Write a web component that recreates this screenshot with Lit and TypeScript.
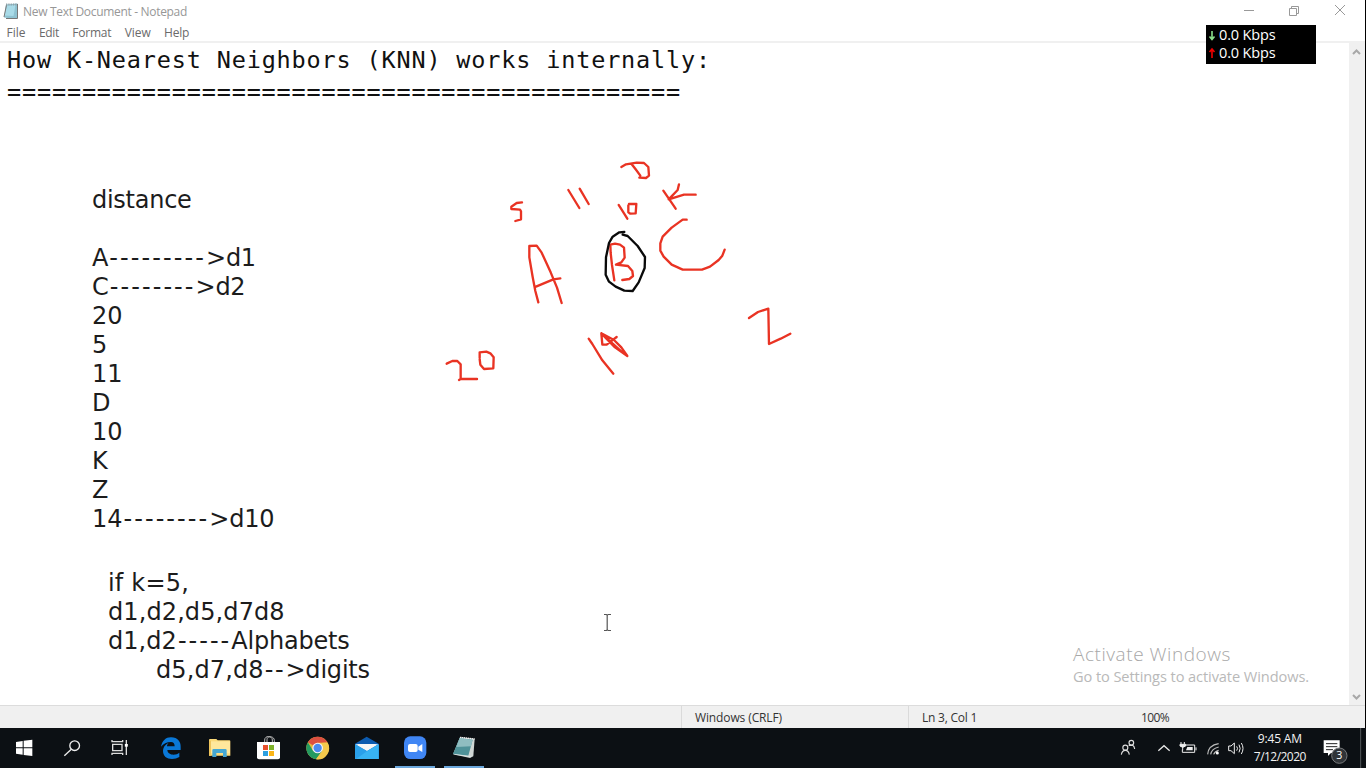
import { LitElement, html, svg, css } from "lit";
import { customElement } from "lit/decorators.js";

const ADV: Record<string, number> = {
  d: 0.623, i: 0.274, s: 0.521, t: 0.394, a: 0.601, n: 0.633, c: 0.521, e: 0.596, A: 0.684, C: 0.698,
  D: 0.771, K: 0.693, Z: 0.685, "-": 0.454, ">": 0.818, "=": 0.818, ",": 0.364, " ": 0.352, f: 0.352,
  k: 0.592, l: 0.274, p: 0.623, h: 0.633, b: 0.623, g: 0.623,
};
const advance = (s: string) => [...s].reduce((w, c) => w + (ADV[c] ?? 0.636), 0) * 23.92;

const NOTES = ["distance", "", "A--------->d1", "C-------->d2", "20", "5", "11", "D", "10", "K", "Z", "14-------->d10"];

const MENU: [string, number][] = [["File", 19], ["Edit", 20], ["Format", 39], ["View", 26], ["Help", 25]];

const line = (s: string) =>
  html`<div class="note">${(s.match(/-+|[^-]+/g) ?? []).map((r) => html`<span class=${r[0] === "-" ? "dash" : ""} data-w=${advance(r)}>${r}</span>`)}</div>`;

const taskIcon = (cx: number, body: unknown, cls = "") =>
  html`<div class="task ${cls}"><svg class="ticon" viewBox="${cx - 72} 84 144 120">${body}</svg></div>`;

const trayIcon = (x: number, w: number, body: unknown) =>
  html`<svg width=${w / 3} height="40" viewBox="${x} 84 ${w} 120">${body}</svg>`;

@customElement("app-root")
export class AppRoot extends LitElement {
  static styles = css`
    :host { display: flex; flex-direction: column; position: relative; width: 1366px; height: 768px; overflow: hidden; background: #fff; font: 12px/18px "Open Sans", "Noto Sans", sans-serif; color: #000; }
    * { box-sizing: border-box; }
    span { white-space: pre; }
    svg { display: block; flex: none; }
    .window { display: flex; flex-direction: column; height: 728px; border-right: 1px solid #000; }
    .title { display: flex; height: 23px; padding-left: 3px; color: #979797; }
    .title .name { line-height: 23px; margin-left: 4px; }
    .controls { margin-left: auto; }
    .menu { display: flex; gap: 13.4px; height: 18px; padding-left: 6.5px; line-height: 19px; color: #6a6a6a; }
    .body { display: flex; flex: 1; min-height: 0; border-top: 2px solid #f0f0f0; }
    .text { flex: 1; padding: 1px 0 0 7px; }
    .head { font: 23.5px/32px "DejaVu Sans Mono", monospace; color: #111; height: 32px; }
    .notes { padding: 78px 0 0 85px; }
    .more { padding: 35px 0 0 101px; }
    .note { display: flex; height: 29px; font: 24px/29px "DejaVu Sans", sans-serif; color: #1c1c1c; }
    .dash { text-indent: 1px; }
    .indent { padding-left: 48px; }
    .scroll { width: 16px; background: #f0f0f0; display: flex; flex-direction: column; justify-content: space-between; }
    .status { display: flex; height: 23px; background: #f0f0f0; border-top: 1px solid #dcdcdc; line-height: 24px; color: #333; }
    .cell { border-left: 1px solid #dadada; padding-left: 13px; }
    .c0 { width: 681px; } .c1 { width: 227px; } .c2 { width: 220px; } .c3 { border: 0; }
    .taskbar { display: flex; height: 40px; background: #0c1014; color: #f2f2f2; }
    .task { width: 48px; display: flex; flex-direction: column; align-items: center; }
    .app { width: 48.8px; }
    .first { margin-left: 3px; }
    .ticon { width: 48px; height: 40px; }
    .run { background: linear-gradient(#6ba7dc, #6ba7dc) center bottom / 40px 2px no-repeat; }
    .tray { display: flex; margin-left: auto; }
    .clock { width: 62px; display: flex; flex-direction: column; align-items: center; padding: 2px 9px 0 0; }
    .ink { position: absolute; left: 0; top: 0; fill: none; stroke: #e93323; stroke-width: 7; stroke-linecap: round; stroke-linejoin: round; }
    .net { position: absolute; left: 1206px; top: 25px; width: 110px; height: 39px; background: #000; color: #fff; font-size: 14.5px; line-height: 18px; padding: 1px 0 0 2px; }
    .row { display: flex; gap: 3px; }
    .activate { position: absolute; left: 1073px; top: 640px; color: #b9b9b9; font-size: 15px; line-height: 20px; }
    .big { font-size: 19px; line-height: 28px; height: 28px; display: flex; font-weight: 300; color: #a8a8a8; }
    .small { display: flex; font-size: 14.6px; height: 20px; line-height: 17px; }
  `;

  // Spread each label over the advance width noted in its data-w attribute.
  firstUpdated() {
    this.renderRoot.querySelectorAll<HTMLElement>("[data-w]").forEach((el) => {
      const n = [...(el.textContent ?? "")].length;
      const natural = el.getBoundingClientRect().width;
      el.style.letterSpacing = `${(Number(el.dataset.w) - natural) / n}px`;
    });
  }

  render() {
    return html`
      <div class="window">
        <div class="title">
          <svg width="16" height="23" viewBox="0 0 16 23">
            <path d="M3 4.5 14.5 3.5 14 18 11 19 1 17.5z" fill="#8fc3d2" />
            <path d="M4 5.5 12.5 5 10.5 16 1.5 15.5z" fill="#a9dbe8" />
            <path d="M14.5 4V18.5H3M1 17 3.5 5" stroke="#777" fill="none" />
            <path d="M3 4.5H14" stroke="#91a4aa" stroke-dasharray="1.3 1" stroke-width="2" />
          </svg>
          <span class="name" data-w="164">New Text Document - Notepad</span>
          <svg class="controls" width="136" height="23" viewBox="1229 0 136 23" fill="none" stroke="#999">
            <path d="M1244 10.5H1254M1289.5 8.5H1296.5V15.5H1289.5zM1291.5 8V6.5H1298.5V13.5H1297M1335 5 1345 15M1345 5 1335 15" />
          </svg>
        </div>
        <div class="menu">${MENU.map(([t, w]) => html`<span data-w=${w}>${t}</span>`)}</div>
        <div class="body">
          <div class="text">
            <div class="head"><span data-w="704">How K-Nearest Neighbors (KNN) works internally:</span></div>
            <div class="head"><span data-w="674">${"=".repeat(45)}</span></div>
            <div class="notes">${NOTES.map(line)}</div>
            <div class="more">
              ${line("if k=5,")}${line("d1,d2,d5,d7d8")}${line("d1,d2-----Alphabets")}
              <div class="indent">${line("d5,d7,d8-->digits")}</div>
            </div>
          </div>
          <div class="scroll">
            <svg width="16" height="17" fill="none" stroke="#a8a8a8" stroke-width="2"><path d="M4 11 7.5 7.5 11 11" /></svg>
            <svg width="16" height="17" fill="none" stroke="#a8a8a8" stroke-width="2"><path d="M4 7 7.500 10.500 11 7" /></svg>
          </div>
        </div>
        <div class="status">
          <div class="c0"></div>
          <div class="cell c1"><span data-w="87">Windows (CRLF)</span></div>
          <div class="cell c2"><span data-w="55">Ln 3, Col 1</span></div>
          <div class="cell c3"><span data-w="28">100%</span></div>
        </div>
      </div>

      <div class="taskbar">
        ${taskIcon(72, svg`<path d="M48 126 68 123V142H48zM71 122 97 119V142H71zM48 145H68V164L48 161zM71 145H97V168L71 165z" fill="#fff"/>`)}
        ${taskIcon(216, svg`<g fill="none" stroke="#eee" stroke-width="4"><circle cx="224" cy="137" r="14.5"/><path d="M214 148 193 167"/></g>`)}
        ${taskIcon(360, svg`<g fill="none" stroke="#ddd" stroke-width="4"><path d="M338 133H366V152H338zM336 120V125H368V120M336 165V160H368V165M379 120V165"/><path d="M379 132V140" stroke="#fff" stroke-width="9"/></g>`)}
        ${taskIcon(514, svg`<path d="M484 140C488 121 500 111 515 112 534 112 544 126 543 141V150H503C504 160 513 164 521 164 529 164 535 161 539 158V171C532 175 526 177 517 177 501 177 490 168 490 153 490 142 497 133 507 129 503 132 502 136 502 139H525C525 130 521 126 514 126 501 126 491 131 484 140Z" fill="#0a78d7"/>`, "app first")}
        ${taskIcon(660, svg`<path d="M627 120Q627 117 630 117H649L653 121H688Q691 121 691 124V167H627z" fill="#fbd978"/><path d="M632 124H690V160H632z" fill="#ffe79c"/><path d="M627 121V167H633V122z" fill="#efc45b"/><path d="M637 171V151Q637 147 641 147H676Q680 147 680 151V171H669V159H649V171z" fill="#45a7d3"/>`, "app")}
        ${taskIcon(57, svg`<path d="M44 127V120C44 106 67 106 67 120V127M51 127V119C51 106 74 108 73 122V127" fill="none" stroke="#bbb" stroke-width="3"/><path d="M21 126H90V172Q90 178 84 178H27Q21 178 21 172z" fill="#fff"/><path d="M39 135H54V150H39z" fill="#e8502c"/><path d="M57 135H72V150H57z" fill="#7fb32a"/><path d="M39 153H54V168H39z" fill="#2c9fe0"/><path d="M57 153H72V168H57z" fill="#fbb517"/>`, "app")}
        ${taskIcon(204, svg`<circle cx="203" cy="144" r="34" fill="#e5b43c"/><path d="M203 144 173.500 127A34 34 0 0 1 232.500 127L217 128z" fill="#dc5040"/><path d="M173.500 127A34 34 0 0 0 198 177.700L217 152 189 152z" fill="#249a60"/><path d="M203 128H233A34 34 0 0 1 198 178L217 152z" fill="#f4c94c"/><circle cx="203" cy="144" r="16" fill="#f4f4f4"/><circle cx="203" cy="144" r="12.500" fill="#4a8af0"/>`, "app")}
        ${taskIcon(351, svg`<path d="M315 131 350 110 386 131V177H315z" fill="#0c5bb0"/><path d="M315 133H386L351 154z" fill="#f3f5f7"/><path d="M315 132 351 153 386 132V177H315z" fill="#2aa0ea"/><path d="M321 132H380L351 151z" fill="#f6f6f6"/><path d="M386 134V177H318L352 153z" fill="#38b3f3"/>`, "app")}
        ${taskIcon(496, svg`<rect x="463" y="109" width="67" height="68" rx="19" fill="#4086f4"/><rect x="475" y="132" width="29" height="24" rx="6" fill="#fff"/><path d="M506 140 518 132V156L506 149z" fill="#fff"/>`, "app run")}
        ${taskIcon(643, svg`<path d="M631 112 675 116 671 169 661 174 610 163z" fill="#cfd6d4"/><path d="M630 114 669 119 656 167 610 162z" fill="#4f9299"/><path d="M630 114 669 119 664 139 620 141z" fill="#8fbdc1"/><path d="M631 112 675 117" stroke="#eee" stroke-width="4" stroke-dasharray="4 2"/><path d="M614 163 658 169 664 170" stroke="#e4eded" stroke-width="2" fill="none"/>`, "app run")}
        <div class="tray">
          ${trayIcon(84, 96, svg`<g fill="none" stroke="#ddd" stroke-width="3.500"><circle cx="124" cy="128" r="7"/><path d="M116 136 128 136Q133 139 134 147"/><circle cx="106" cy="143" r="7.500"/><path d="M94 164Q96 151 106 151 116 151 118 164"/></g>`)}
          ${trayIcon(180, 75, svg`<path d="M205 152 222 137 239 152" fill="none" stroke="#e6e6e6" stroke-width="4"/>`)}
          ${trayIcon(255, 78, svg`<g fill="none" stroke="#eee" stroke-width="3"><path d="M287 135H314V157H277V149M318 142V151M273 126V133M283 126V133M278 141V151"/><path d="M270 133H287V138Q278 146 270 138z" fill="#eee"/><path d="M292 141H308V151H288z" fill="#eee" stroke="none"/></g>`)}
          ${trayIcon(333, 69, svg`<g fill="none" stroke="#bbb" stroke-width="3.500"><path d="M353 163Q355 136 386 131M362 163Q365 146 386 141M371 163Q374 155 386 151"/></g><circle cx="382" cy="159" r="4.500" fill="#fff"/>`)}
          ${trayIcon(402, 87, svg`<g fill="none" stroke="#eee" stroke-width="3"><path d="M416 138H423L433 129V161L423 152H416zM440 139Q445 145 440 152M447 134Q454 145 447 157M454 129Q464 145 454 162"/></g>`)}
          <div class="clock"><span data-w="44">9:45 AM</span><span data-w="52">7/12/2020</span></div>
          ${trayIcon(676, 152, svg`<path d="M702 121H750V159H724L715 168V159H702z" fill="#fff"/><path d="M709 131H743M709 140H743M709 149H730" stroke="#222" stroke-width="3"/><circle cx="749" cy="167" r="23" fill="#303438" stroke="#77797b" stroke-width="3"/><text x="749" y="178" text-anchor="middle" font-size="32" fill="#fff">3</text><path d="M813 84V204" stroke="#55595c" stroke-width="3"/>`)}
        </div>
      </div>

      <svg class="ink" width="1366" height="728" viewBox="0 0 1366 728">
        <g transform="translate(490 150) scale(.33333)">
          <path d="M96 157 80 159 64 170V177L90 179 93 184V208L76 213" />
          <path d="M235 120 268 174M269 116 296 162" />
          <path d="M394 51 408 43 440 38 462 39 475 51 477 77 468 84 448 83M424 41 437 58 451 77" />
          <path d="M386 165 412 206M415 166V187L421 191 437 190 439 162 417 162" />
          <path d="M520 122 557 176M567 103 563 120 536 148 582 134H617" />
          <path d="M590 209H578L545 233 518 260 511 280V302L521 320 545 344 578 359H636L660 350 686 330 697 317 704 299" />
          <path d="M145 457 136 423 128 381 118 322V288L140 287 155 308 182 367 201 413 215 459M138 410 190 388 211 385" />
          <path d="M361 284 362 309 366 345 373 391M361 284 375 281 390 284 402 293 404 323 394 337 378 344 414 348 427 363 429 378 418 387 397 390" />
          <path stroke="#0a0a0a" d="M403 246 388 247 368 260 357 279 348 322 347 374 357 395 377 410 403 422 428 423 446 397 464 354 465 321 443 288 413 258 398 254" />
        </g>
        <g transform="translate(430 300) scale(.33333)">
          <path d="M50 191 67 183H82L92 193V237M87 240 92 237H141" />
          <path d="M149 173V157L169 155 181 160 191 172 190 205 162 207 151 194 149 177" />
          <path d="M476 116 487 132 517 181 550 221M514 100 517 134 530 134 560 111M514 100 552 120 574 142 592 168 555 142 514 100 578 158" />
          <path d="M957 54 984 36 1015 26 1017 132 1052 116 1081 101" />
        </g>
        <path d="M604 614.500H606.500L607.200 615.500V629.500L606.500 630.500H604M611 614.500H608L607.200 615.500M611 630.500H608L607.200 629.500" stroke="#555" stroke-width="1.200" stroke-linecap="butt" />
      </svg>

      <div class="net">
        <div class="row"><svg width="8" height="18" fill="none" stroke="#8be08b" stroke-width="1.600"><path d="M4 5V13M1.500 10.500 4 13.500 6.500 10.500" /></svg><span data-w="56.500">0.0 Kbps</span></div>
        <div class="row"><svg width="8" height="18" fill="none" stroke="#f00000" stroke-width="1.600"><path d="M4 5V14M1.500 8 4 5 6.500 8" /></svg><span data-w="56.500">0.0 Kbps</span></div>
      </div>
      <div class="activate">
        <div class="big"><span data-w="158">Activate Windows</span></div>
        <div class="small"><span data-w="236">Go to Settings to activate Windows.</span></div>
      </div>
    `;
  }
}
